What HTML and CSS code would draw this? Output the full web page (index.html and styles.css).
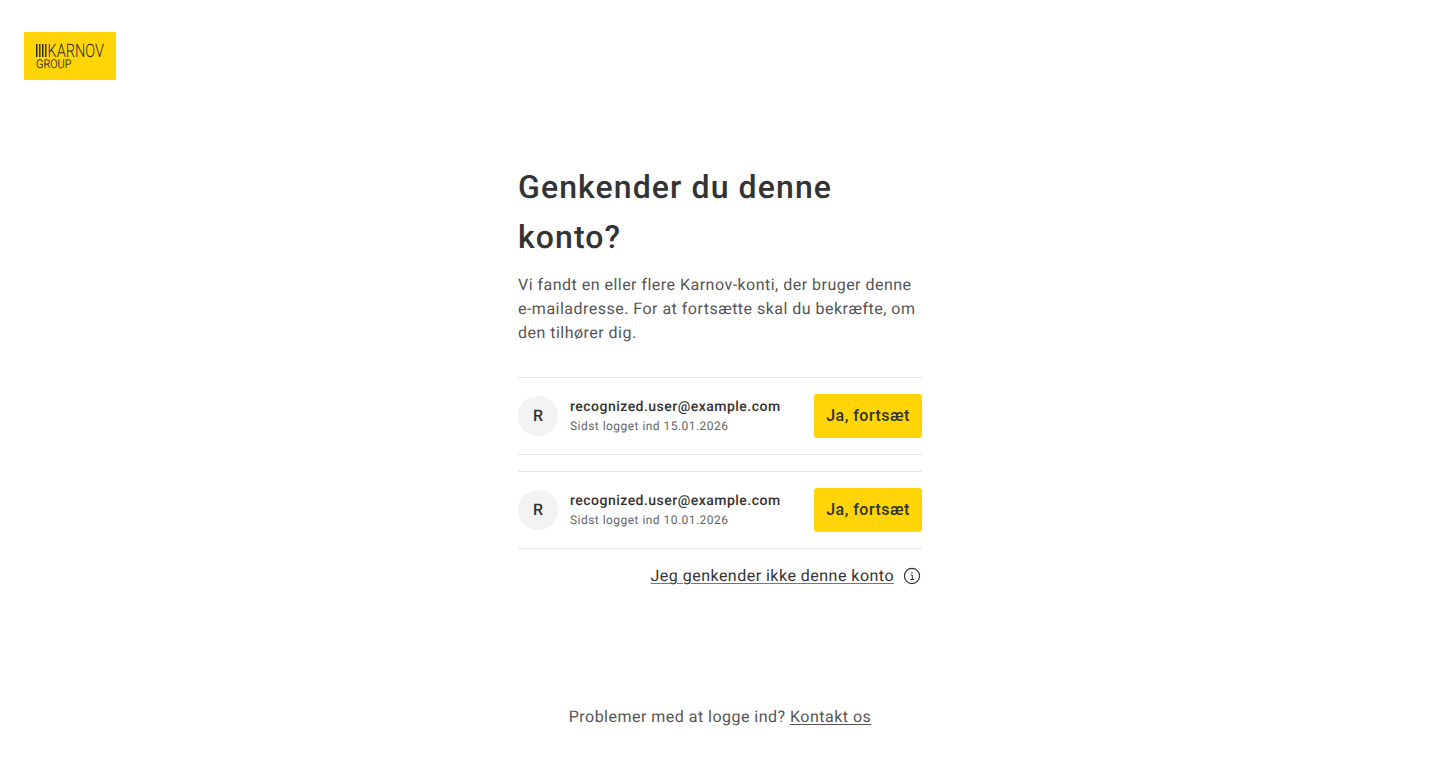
FILE: index.html
```html
<!DOCTYPE html>
<html lang="da">
<head>
<meta charset="utf-8">
<title>Karnov</title>
<link rel="stylesheet" href="styles.css">
</head>
<body>
<div class="page">
  <header class="header">
    <a class="logo" href="#" aria-label="Karnov Group">
      <svg class="logo-mark" width="92" height="48" viewBox="0 0 92 48" aria-hidden="true">
        <rect x="12" y="12" width="1.5" height="13"/>
        <rect x="15" y="12" width="1.5" height="13"/>
        <rect x="18" y="12" width="1.5" height="13"/>
        <rect x="21" y="12" width="1.5" height="13"/>
        <text class="logo-name" transform="translate(23.5 25) scale(0.785 1)">KARNOV</text>
        <text class="logo-group" transform="translate(12 35.5) scale(0.9 1)">GROUP</text>
      </svg>
    </a>
  </header>
  <main class="main">
    <h1 class="title">Genkender du denne konto?</h1>
    <p class="intro">Vi fandt en eller flere Karnov-konti, der bruger denne e-mailadresse. For at fortsætte skal du bekræfte, om den tilhører dig.</p>
    <ul class="accounts">
      <li class="account">
        <span class="avatar">R</span>
        <div class="details">
          <div class="email">recognized.user@example.com</div>
          <div class="last">Sidst logget ind 15.01.2026</div>
        </div>
        <button class="confirm" type="button">Ja, fortsæt</button>
      </li>
      <li class="account">
        <span class="avatar">R</span>
        <div class="details">
          <div class="email">recognized.user@example.com</div>
          <div class="last">Sidst logget ind 10.01.2026</div>
        </div>
        <button class="confirm" type="button">Ja, fortsæt</button>
      </li>
    </ul>
    <div class="deny">
      <a href="#" class="deny-link">Jeg genkender ikke denne konto</a>
      <svg class="info" width="20" height="20" viewBox="0 0 20 20" fill="none" aria-hidden="true">
        <circle cx="10" cy="10" r="7.6" stroke="#333" stroke-width="1.2"/>
        <path d="M8.6 9h1.7v4.4M8.4 13.5h3.6" stroke="#333" stroke-width="1"/>
        <rect x="9.4" y="6" width="1.2" height="1.3" fill="#333"/>
      </svg>
    </div>
  </main>
  <footer class="footer">Problemer med at logge ind? <a href="#">Kontakt os</a></footer>
</div>
</body>
</html>
```
FILE: styles.css
```css
* { box-sizing: border-box; }
html, body { margin: 0; padding: 0; }
body {
  font-family: Roboto, "Noto Sans", sans-serif;
  color: #2d2d2d;
  background: #fff;
  text-rendering: geometricPrecision;
}
.page {
  min-height: 761px;
  display: flex;
  flex-direction: column;
}
.header { padding: 32px 24px 0; height: 162px; }
.logo {
  display: block;
  width: 92px;
  height: 48px;
  background: #ffd507;
}
.logo-mark { display: block; fill: #2d2d2d; }
.logo-name {
  font-family: Roboto, sans-serif;
  font-weight: 300;
  font-size: 18.5px;
}
.logo-group {
  font-family: Roboto, sans-serif;
  font-weight: 300;
  font-size: 12px;
  stroke: #2d2d2d;
  stroke-width: 0.2px;
}
.main {
  width: 404px;
  margin: 0 auto;
}
.title {
  margin: 0;
  font-size: 32px;
  line-height: 50px;
  font-weight: 500;
  letter-spacing: 1.1px;
  color: #333;
}
.intro {
  margin: 11px 0 32px;
  font-size: 16px;
  line-height: 24px;
  letter-spacing: 0.48px;
  color: #555;
}
.accounts {
  list-style: none;
  margin: 0;
  padding: 0;
  display: flex;
  flex-direction: column;
  gap: 16px;
}
.account {
  display: flex;
  align-items: center;
  height: 78px;
  border-top: 1px solid #e4e4e4;
  border-bottom: 1px solid #e4e4e4;
}
.avatar {
  flex: none;
  width: 40px;
  height: 40px;
  padding-bottom: 1px;
  border-radius: 50%;
  background: #f3f3f3;
  display: flex;
  align-items: center;
  justify-content: center;
  font-size: 16px;
  font-weight: 500;
  color: #333;
  margin-right: 12px;
}
.details { flex: 1; min-width: 0; }
.email {
  font-size: 14px;
  line-height: 20px;
  font-weight: 500;
  letter-spacing: 0.48px;
  color: #333;
}
.last {
  font-size: 12px;
  line-height: 18px;
  letter-spacing: 0.46px;
  color: #666;
}
.confirm {
  flex: none;
  width: 108px;
  height: 44px;
  border: 0;
  border-radius: 3px;
  background: #ffd507;
  color: #333;
  font: 500 16px/24px Roboto, sans-serif;
  letter-spacing: 0.5px;
  padding: 0;
}
.deny {
  display: flex;
  justify-content: flex-end;
  align-items: center;
  gap: 8px;
  height: 24px;
  margin-top: 15px;
}
.deny-link {
  font-size: 16px;
  line-height: 24px;
  letter-spacing: 0.48px;
  color: #333;
  text-decoration: underline;
  text-decoration-color: #777;
  text-underline-offset: 2px;
  text-decoration-thickness: 1px;
}
.info { flex: none; }
.footer {
  margin-top: 117px;
  text-align: center;
  font-size: 16px;
  line-height: 24px;
  letter-spacing: 0.48px;
  color: #555;
}
.footer a { color: inherit; text-underline-offset: 2px; text-decoration-thickness: 1px; }
```
